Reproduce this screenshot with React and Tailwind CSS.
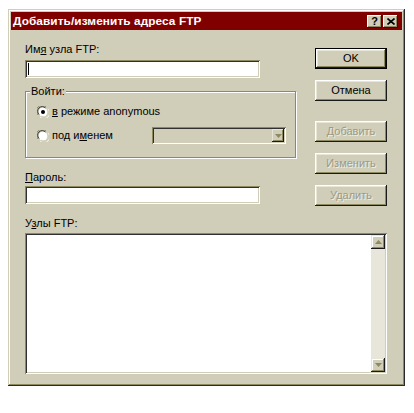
const FACE = "#d0cdb9";

function Radio({ checked }) {
  return (
    <svg width="12" height="12" viewBox="0 0 12 12" className="shrink-0">
      <path d="M1 9 A5.5 5.5 0 0 1 9 1" fill="none" stroke="#8d8961" strokeWidth="1" />
      <circle cx="6" cy="6" r="4.5" fill="#fff" />
      <path d="M2 8.5 A4.2 4.2 0 0 1 8.5 2" fill="none" stroke="#303030" strokeWidth="1" />
      <path d="M11 3 A5.5 5.5 0 0 1 3 11" fill="none" stroke="#f4f3ea" strokeWidth="1" />
      <path d="M10 4 A4.2 4.2 0 0 1 4 10" fill="none" stroke={FACE} strokeWidth="1" />
      {checked && <circle cx="6" cy="6" r="2" fill="#000" />}
    </svg>
  );
}

function Btn({ children, def, disabled }) {
  const inner = (
    <div className="w-full h-full flex items-center justify-center shadow-[inset_-1px_-1px_0_#1a1a1a,inset_1px_1px_0_#fff,inset_-2px_-2px_0_#8d8961,inset_2px_2px_0_#e6e5d8]">
      {disabled ? (
        <span className="text-[#9d9a84] [text-shadow:1px_1px_0_#efeee4]">{children}</span>
      ) : (
        <span className="text-black">{children}</span>
      )}
    </div>
  );
  return (
    <div className={"w-[72px] h-[21px] bg-[#d0cdb9] " + (def ? "border border-black" : "")}>
      {inner}
    </div>
  );
}

function Arrow({ up, color = "#000" }) {
  return (
    <svg width="7" height="4" viewBox="0 0 7 4">
      {up ? (
        <path d="M3.5 0 L7 4 L0 4 Z" fill={color} />
      ) : (
        <path d="M0 0 L7 0 L3.5 4 Z" fill={color} />
      )}
    </svg>
  );
}

function ScrollBtn({ up }) {
  return (
    <div className="w-[14px] h-[14px] bg-[#d0cdb9] flex items-center justify-center shadow-[inset_-1px_-1px_0_#1a1a1a,inset_1px_1px_0_#e6e5d8,inset_-2px_-2px_0_#8d8961,inset_2px_2px_0_#fff]">
      <Arrow up={up} color="#8d8961" />
    </div>
  );
}

const sunken =
  "shadow-[inset_1px_1px_0_#8d8961,inset_-1px_-1px_0_#fff,inset_2px_2px_0_#303030,inset_-2px_-2px_0_#d0cdb9]";

export default function App() {
  return (
    <div className="w-[414px] h-[413px] bg-white pt-[9px] pl-[8px] font-['Liberation_Sans',Arial,sans-serif] text-[11px] leading-[13px] text-black">
      <div className="w-[397px] h-[377px] bg-[#d0cdb9] p-[3px] flex flex-col shadow-[inset_-1px_-1px_0_#2a2a2a,inset_1px_1px_0_#d0cdb9,inset_-2px_-2px_0_#8d8961,inset_2px_2px_0_#fff]">
        {/* Title bar */}
        <div className="h-[18px] bg-[#800000] flex items-center pl-[2px] pr-[4px]">
          <span className="text-white font-bold text-[11.8px] tracking-[0.1px]">
            Добавить/изменить адреса FTP
          </span>
          <div className="ml-auto flex items-center gap-[1px]">
            <div className="w-[15px] h-[13px] bg-[#d0cdb9] flex items-center justify-center font-bold text-[11px] leading-none shadow-[inset_-1px_-1px_0_#1a1a1a,inset_1px_1px_0_#fff,inset_-2px_-2px_0_#8d8961]">
              ?
            </div>
            <div className="w-[15px] h-[13px] bg-[#d0cdb9] flex items-center justify-center shadow-[inset_-1px_-1px_0_#1a1a1a,inset_1px_1px_0_#fff,inset_-2px_-2px_0_#8d8961]">
              <svg width="8" height="7" viewBox="0 0 8 7">
                <path d="M0.5 0.5 L7.5 6.5 M7.5 0.5 L0.5 6.5" stroke="#000" strokeWidth="1.6" />
              </svg>
            </div>
          </div>
        </div>

        {/* Content */}
        <div className="flex flex-col pl-[14px] pt-[13px]">
          <div className="flex">
            {/* Left column */}
            <div className="w-[271px] flex flex-col">
              <div className="h-[13px]">
                Им<span className="underline">я</span> узла FTP:
              </div>
              <div className={"mt-[4px] w-[235px] h-[18px] bg-white relative " + sunken}>
                <div className="absolute left-[3px] top-[3px] w-[1px] h-[12px] bg-black" />
              </div>

              {/* Group box */}
              <div className="mt-[13px] relative h-[67px] border border-[#8d8961] shadow-[1px_1px_0_#fff,inset_1px_1px_0_#fff] pl-[11px] pr-[9px] pt-[13px]">
                <div className="absolute -top-[7px] left-[4px] px-[1px] bg-[#d0cdb9] leading-[13px]">
                  Войти:
                </div>
                <div className="flex items-center h-[13px] gap-[3px]">
                  <Radio checked />
                  <span>
                    <span className="underline">в</span> режиме anonymous
                  </span>
                </div>
                <div className="flex items-center h-[17px] mt-[9px] gap-[3px]">
                  <Radio />
                  <span>
                    под и<span className="underline">м</span>енем
                  </span>
                  <div className={"ml-auto w-[134px] h-[17px] bg-[#d0cdb9] p-[2px] flex justify-end " + sunken}>
                    <div className="w-[12px] h-[13px] bg-[#d0cdb9] flex items-center justify-center shadow-[inset_-1px_-1px_0_#1a1a1a,inset_1px_1px_0_#e6e5d8,inset_-2px_-2px_0_#8d8961]">
                      <Arrow color="#8d8961" />
                    </div>
                  </div>
                </div>
              </div>

              <div className="mt-[13px] h-[13px]">
                <span className="underline">П</span>ароль:
              </div>
              <div className={"mt-[2px] w-[235px] h-[18px] bg-white " + sunken} />
            </div>

            {/* Buttons */}
            <div className="ml-[19px] mt-[5px] flex flex-col">
              <Btn def>OK</Btn>
              <div className="mt-[11px]">
                <Btn>Отмена</Btn>
              </div>
              <div className="mt-[20px]">
                <Btn disabled>Добавить</Btn>
              </div>
              <div className="mt-[11px]">
                <Btn disabled>Изменить</Btn>
              </div>
              <div className="mt-[11px]">
                <Btn disabled>Удалить</Btn>
              </div>
            </div>
          </div>

          <div className="mt-[11px] h-[13px]">
            У<span className="underline">з</span>лы FTP:
          </div>
          <div className={"mt-[3px] w-[362px] h-[141px] bg-white p-[2px] flex justify-end " + sunken}>
            <div className="w-[14px] h-full flex flex-col bg-[#e8e6da]">
              <ScrollBtn up />
              <div className="flex-1" />
              <ScrollBtn />
            </div>
          </div>
        </div>
      </div>
    </div>
  );
}
